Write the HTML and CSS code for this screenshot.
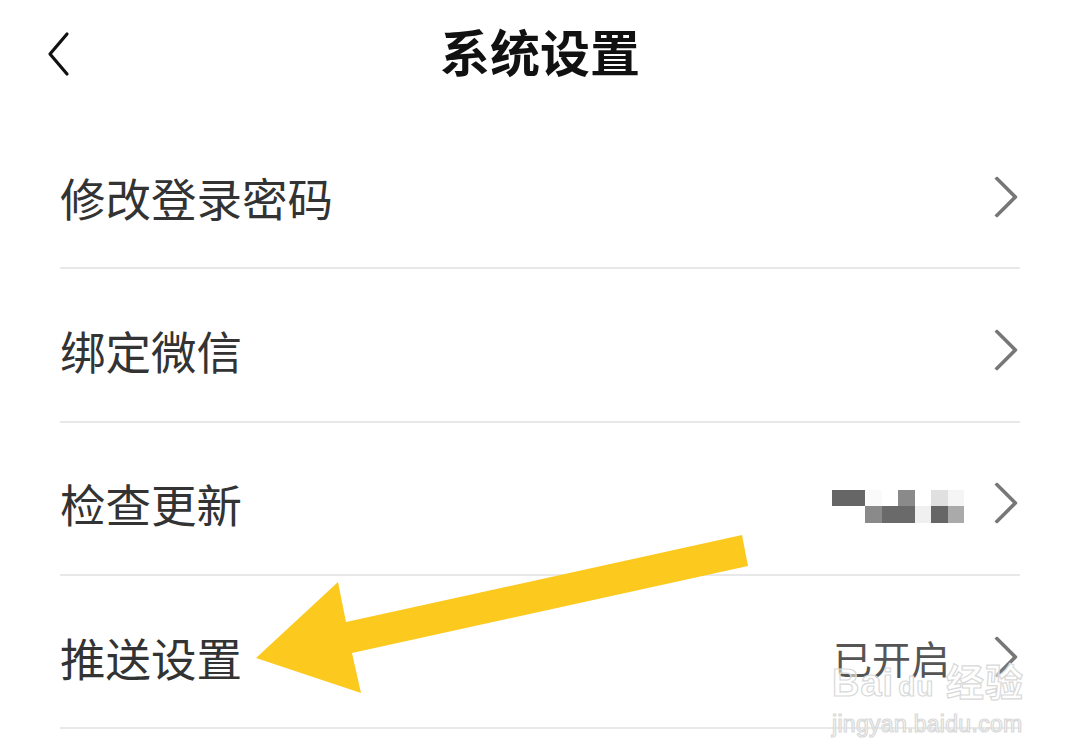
FILE: index.html
```html
<!DOCTYPE html>
<html lang="zh-CN">
<head>
  <meta charset="UTF-8">
  <title>系统设置</title>
  <link rel="stylesheet" href="styles.css">
</head>
<body>
  <div class="page">
    <div class="header">
      <div class="back">
        <svg width="30" height="46" viewBox="0 0 30 46"><path d="M24 3 L7 23 L24 43" fill="none" stroke="#111" stroke-width="3.2" stroke-linecap="round" stroke-linejoin="round"/></svg>
      </div>
      <h1 class="title">系统设置</h1>
      <div></div>
    </div>

    <div class="list">
      <div class="row">
        <span class="label">修改登录密码</span>
        <span class="right"><span class="chev"></span></span>
      </div>
      <div class="row">
        <span class="label">绑定微信</span>
        <span class="right"><span class="chev"></span></span>
      </div>
      <div class="row">
        <span class="label">检查更新</span>
        <span class="right">
          <span class="mosaic">
            <i class="c66 w2"></i><i class="cfa"></i><i></i><i class="c8a"></i><i></i><i class="ce0"></i><i class="cf5"></i>
            <i class="w2"></i><i class="c8a"></i><i class="c6a w2"></i><i class="cf0"></i><i class="c66"></i><i class="caa"></i>
          </span>
          <span class="chev"></span>
        </span>
      </div>
      <div class="row">
        <span class="label">推送设置</span>
        <span class="right"><span class="value">已开启</span><span class="chev"></span></span>
      </div>
    </div>

    <svg class="arrow" width="1080" height="755" viewBox="0 0 1080 755">
      <polygon points="742,535 748,566 352,653 361,693 256,658 338,582 346,622" fill="#fcc91f"/>
    </svg>

    <div class="watermark">
      <div class="wm-logo">Bai<span class="paw">du</span> 经验</div>
      <div class="wm-url">jingyan.baidu.com</div>
    </div>
  </div>
</body>
</html>
```

FILE: styles.css
```css
body { margin: 0; background: #fff; font-family: "Noto Sans CJK SC", "Noto Sans", sans-serif; }
.page { position: relative; width: 1080px; height: 755px; overflow: hidden; }

.header { display: grid; grid-template-columns: 1fr auto 1fr; align-items: center; height: 116px; padding-bottom: 16px; box-sizing: border-box; }
.back { padding-left: 43px; padding-top: 8px; }
.back svg { display: block; }
.title { margin: 0; font-size: 50px; font-weight: 700; color: #111; }

.list { padding: 0 60px; }
.row { display: flex; align-items: center; justify-content: space-between; height: 153.3px; padding-top: 10px; box-sizing: border-box; border-bottom: 2px solid #e8e8e8; }
.label { font-size: 45.5px; color: #333; }
.right { display: flex; align-items: center; gap: 30px; }
.value { font-size: 39px; color: #555; margin-right: 2px; }
.chev { width: 26px; height: 26px; border-top: 4px solid #777; border-right: 4px solid #777; transform: rotate(45deg); margin-right: 8px; border-radius: 2px; }

.mosaic { display: grid; grid-template-columns: repeat(8, 16.5px); grid-auto-rows: 16.5px; margin-right: -12px; margin-top: 6px; }
.mosaic i { display: block; }
.mosaic .w2 { grid-column: span 2; }
.c66 { background: #666; }
.c6a { background: #6a6a6a; }
.c8a { background: #8a8a8a; }
.caa { background: #aaa; }
.ce0 { background: #e0e0e0; }
.cf0 { background: #f0f0f0; }
.cf5 { background: #f5f5f5; }
.cfa { background: #fafafa; }

.arrow { position: absolute; left: 0; top: 0; pointer-events: none; }

.watermark { position: absolute; left: 832px; top: 662px; color: rgba(255,255,255,0.55); -webkit-text-stroke: 1.2px #d9d9d9; font-family: "Liberation Sans", "Noto Sans CJK SC", sans-serif; }
.wm-logo { font-size: 38px; font-weight: 700; line-height: 42px; letter-spacing: 1px; }
.paw { font-size: 28px; margin-left: 4px; }
.wm-url { font-size: 23px; line-height: 28px; letter-spacing: 0.3px; margin-top: 2px; }
```
